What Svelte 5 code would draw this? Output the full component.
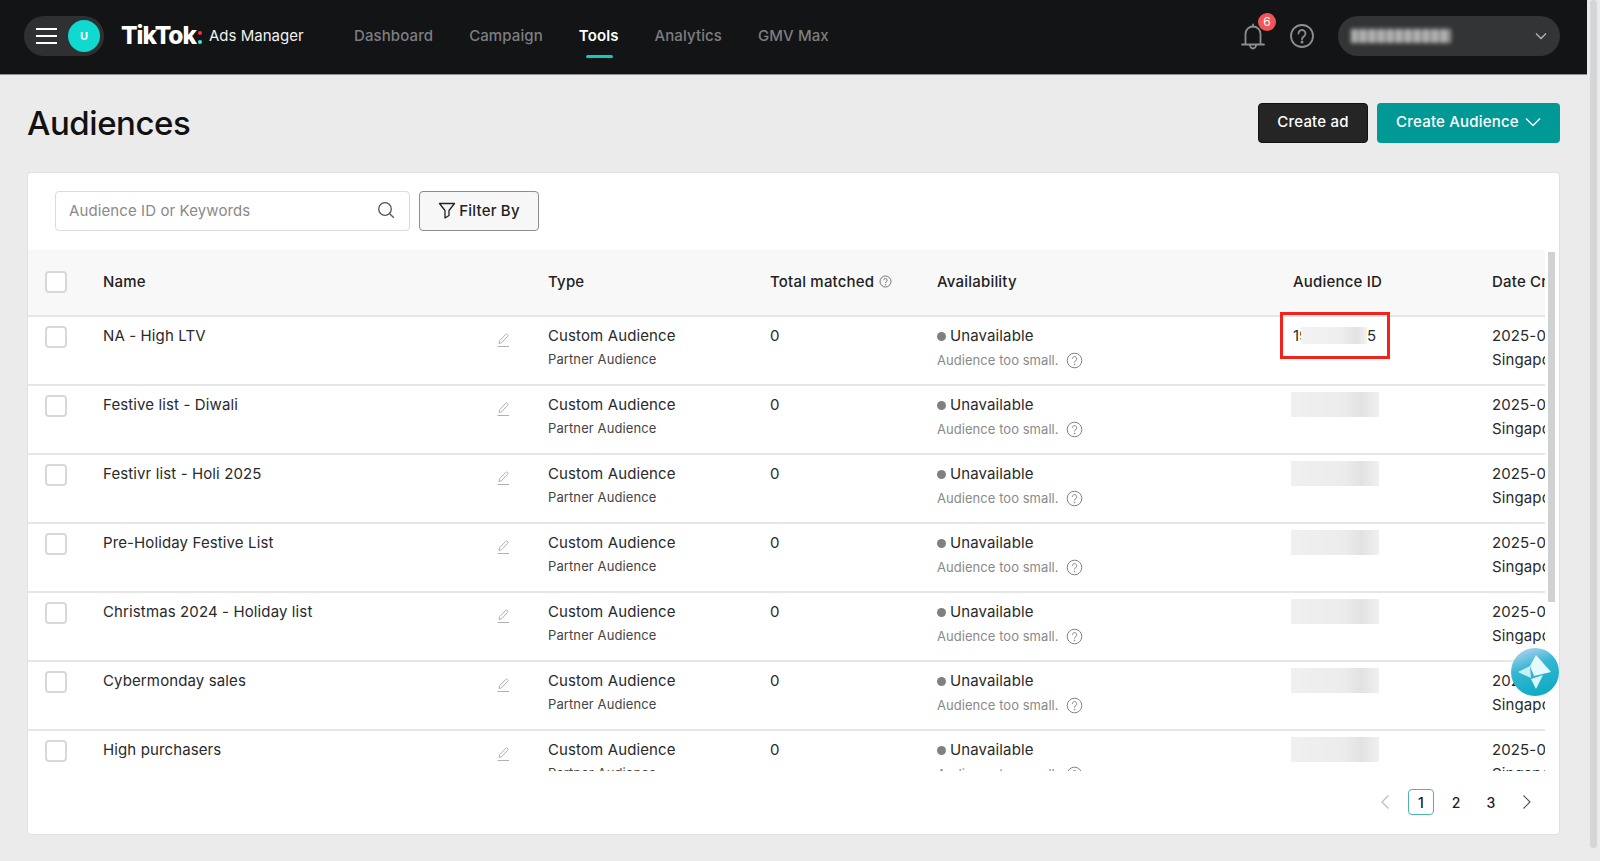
<script>
	const navItems = ['Dashboard', 'Campaign', 'Tools', 'Analytics', 'GMV Max'];
	const rows = [
		{ name: 'NA - High LTV', date: '2025-0' },
		{ name: 'Festive list - Diwali', date: '2025-0' },
		{ name: 'Festivr list - Holi 2025', date: '2025-0' },
		{ name: 'Pre-Holiday Festive List', date: '2025-0' },
		{ name: 'Christmas 2024 - Holiday list', date: '2025-0' },
		{ name: 'Cybermonday sales', date: '2025-0' },
		{ name: 'High purchasers', date: '2025-0' }
	];
</script>

<div class="page">
	<div class="main">
		<header class="nav">
			<div class="pill">
				<span class="burger"><i></i><i></i><i></i></span>
				<span class="avatar">U</span>
			</div>
			<div class="logo">
				<span class="tiktok">TikTok</span>
				<span class="dots"><i class="pink"></i><i class="cyan"></i></span>
				<span class="ads">Ads Manager</span>
			</div>
			<nav>
				{#each navItems as item}
					<span class="nav-item" class:active={item === 'Tools'}>{item}</span>
				{/each}
			</nav>
			<div class="nav-right">
				<span class="bell">
					<svg width="28" height="32" viewBox="0 0 28 32" fill="none" stroke="#8d8e90" stroke-width="1.8">
						<path d="M3 24.5h22M6.5 24.5V14a7.5 7.5 0 0 1 15 0v10.5" stroke-linecap="round" />
						<path d="M14 6.500V4.500" stroke-linecap="round" />
						<path d="M11 25a3 3.500 0 0 0 6 0" />
					</svg>
					<b>6</b>
				</span>
				<svg class="help" width="26" height="26" viewBox="0 0 26 26" fill="none" stroke="#8d8e90" stroke-width="1.8">
					<circle cx="13" cy="13" r="11" />
					<path d="M9.500 10.500a3.500 3.500 0 1 1 5.600 2.800c-1.300 1-2.100 1.600-2.100 3" stroke-linecap="round" />
					<circle cx="13" cy="19" r="0.6" fill="#8d8e90" />
				</svg>
				<div class="account">
					<span class="account-blur"></span>
					<svg width="12" height="8" viewBox="0 0 12 8" fill="none" stroke="#b5b5b5" stroke-width="1.300">
						<path d="M1 1.500l5 5 5-5" />
					</svg>
				</div>
			</div>
		</header>

		<div class="content">
			<div class="title-row">
				<h1>Audiences</h1>
				<div class="actions">
					<button class="btn-dark">Create ad</button>
					<button class="btn-teal">
						Create Audience
						<svg width="16" height="10" viewBox="0 0 16 10" fill="none" stroke="#fff" stroke-width="1.500">
							<path d="M1 1.500l7 7 7-7" />
						</svg>
					</button>
				</div>
			</div>

			<section class="card">
				<div class="toolbar">
					<div class="search">
						<span>Audience ID or Keywords</span>
						<svg width="18" height="18" viewBox="0 0 18 18" fill="none" stroke="#555" stroke-width="1.300">
							<circle cx="8" cy="8" r="6.300" />
							<path d="M12.800 12.800l4 4" />
						</svg>
					</div>
					<button class="filter">
						<svg width="18" height="18" viewBox="0 0 18 18" fill="none" stroke="#222" stroke-width="1.300" stroke-linejoin="round">
							<path d="M1.500 2.500h15L11 9.500v5l-4 2.500V9.500z" />
						</svg>
						Filter By
					</button>
				</div>

				<div class="table-wrap">
					<div class="table">
						<div class="row head">
							<div class="cell-check"><span class="check"></span></div>
							<div>Name</div>
							<div>Type</div>
							<div class="matched">
								Total matched
								<svg width="13" height="13" viewBox="0 0 13 13" fill="none" stroke="#666" stroke-width="0.900">
									<circle cx="6.500" cy="6.500" r="5.500" />
									<path d="M4.800 5.200a1.700 1.700 0 1 1 2.700 1.400c-.6.400-1 .7-1 1.400" />
									<circle cx="6.500" cy="9.600" r="0.300" />
								</svg>
							</div>
							<div>Availability</div>
							<div>Audience ID</div>
							<div>Date Created</div>
						</div>
						{#each rows as row, i}
							<div class="row body">
								<div class="cell-check"><span class="check"></span></div>
								<div class="name">
									<span>{row.name}</span>
									<svg class="pencil" width="14" height="15" viewBox="0 0 14 15" fill="none" stroke="#a8a8a8" stroke-width="0.900">
										<path d="M3 10.500L3.600 7.800 9.500 1.500a1.300 1.300 0 0 1 2 2L5.500 9.800z" />
										<path d="M1.500 13.500h11.500" />
									</svg>
								</div>
								<div>
									<div>Custom Audience</div>
									<div class="sub">Partner Audience</div>
								</div>
								<div>0</div>
								<div>
									<div class="status"><i></i>Unavailable</div>
									<div class="reason">
										Audience too small.
										<svg width="17" height="17" viewBox="0 0 17 17" fill="none" stroke="#808080" stroke-width="1">
											<circle cx="8.500" cy="8.500" r="7.300" />
											<path d="M6.300 6.800a2.200 2.200 0 1 1 3.500 1.800c-.8.600-1.300 1-1.300 1.900" />
											<circle cx="8.500" cy="12.500" r="0.400" />
										</svg>
									</div>
								</div>
								<div class="id-cell">
									{#if i === 0}
										<span class="id-first">19</span><span class="smudge small"></span><span class="id-last">5</span>
									{:else}
										<span class="smudge"></span>
									{/if}
								</div>
								<div>
									<div>{row.date}</div>
									<div class="tz">Singapore</div>
								</div>
							</div>
						{/each}
					</div>
					<div class="redbox"></div>
				</div>
				<div class="inner-scroll"></div>

				<div class="pager">
					<svg class="prev" width="10" height="16" viewBox="0 0 10 16" fill="none" stroke="#bbb" stroke-width="1.200"><path d="M8.500 1.500L2 8l6.500 6.500" /></svg>
					<span class="pg current">1</span>
					<span class="pg">2</span>
					<span class="pg">3</span>
					<svg class="next" width="10" height="16" viewBox="0 0 10 16" fill="none" stroke="#555" stroke-width="1.200"><path d="M1.500 1.500L8 8l-6.500 6.500" /></svg>
				</div>

				<div class="assist">
					<svg width="48" height="48" viewBox="0 0 48 48">
						<path d="M25 7l15 17-17 4-4-10z" fill="#e6f9fb" />
						<path d="M7 24l12-6 1 12z" fill="#c8f0f4" />
						<path d="M20 31l12-4-7 14z" fill="#d9f6f8" />
					</svg>
				</div>
			</section>
		</div>
	</div>
	<aside class="page-scroll"><span></span></aside>
</div>

<style>
	:global(body) {
		margin: 0;
		background: #ebebeb;
	}

	.page {
		display: flex;
		height: 861px;
		overflow: hidden;
		font-family: Inter, 'Liberation Sans', sans-serif;
		color: #222;
	}

	.main {
		width: 1587px;
		flex: none;
	}

	.nav {
		height: 75px;
		box-sizing: border-box;
		background: #131416;
		border-bottom: 1px solid #8f8f8f;
		display: flex;
		align-items: center;
		padding: 0 27px 3px 24px;
	}

	.pill {
		width: 80px;
		height: 40px;
		border-radius: 20px;
		background: #2f3031;
		display: flex;
		align-items: center;
		padding-left: 12px;
		box-sizing: border-box;
		gap: 11px;
	}

	.burger {
		display: flex;
		flex-direction: column;
		gap: 5px;
		width: 21px;
	}

	.burger i {
		height: 2px;
		background: #fff;
	}

	.avatar {
		width: 32px;
		height: 32px;
		border-radius: 50%;
		background: #10d9d0;
		color: #fff;
		font-size: 11px;
		font-weight: 700;
		display: flex;
		align-items: center;
		justify-content: center;
	}

	.logo {
		display: flex;
		align-items: center;
		margin-left: 17px;
		color: #fff;
		width: 233px;
	}

	.tiktok {
		font-size: 24.500px;
		font-weight: 800;
		letter-spacing: -1px;
		line-height: 1;
	}

	.dots {
		display: flex;
		flex-direction: column;
		gap: 5px;
		margin: 3px 7px 0 2px;
	}

	.dots i {
		width: 4px;
		height: 4px;
		border-radius: 50%;
	}

	.pink {
		background: #fe2c55;
	}

	.cyan {
		background: #25f4ee;
	}

	.ads {
		font-size: 15px;
		color: #f2f2f2;
	}

	nav {
		display: flex;
		gap: 36px;
		height: 100%;
	}

	.nav-item {
		display: flex;
		align-items: center;
		position: relative;
		font-size: 15px;
		font-weight: 500;
		letter-spacing: 0.1px;
		color: #7d7e80;
	}

	.nav-item.active {
		color: #fff;
		font-weight: 600;
	}

	.nav-item.active::after {
		content: '';
		position: absolute;
		left: 7px;
		right: 6px;
		bottom: 13px;
		height: 3px;
		border-radius: 2px;
		background: #12c8c0;
	}

	.nav-right {
		margin-left: auto;
		display: flex;
		align-items: center;
	}

	.bell {
		position: relative;
		display: flex;
		margin-right: 22px;
	}

	.bell b {
		position: absolute;
		top: -7px;
		right: -9px;
		width: 18px;
		height: 18px;
		border-radius: 50%;
		background: #f25555;
		color: #fff;
		font-size: 12px;
		font-weight: 400;
		display: flex;
		align-items: center;
		justify-content: center;
	}

	.account {
		width: 222px;
		height: 40px;
		margin-left: 23px;
		border-radius: 20px;
		background: #333435;
		display: flex;
		align-items: center;
		justify-content: space-between;
		padding: 0 13px;
		box-sizing: border-box;
	}

	.account-blur {
		width: 100px;
		height: 14px;
		background: repeating-linear-gradient(90deg, #b5b5b5 0 6px, #858585 6px 9px);
		filter: blur(2px);
	}

	.content {
		padding: 0 27px;
	}

	.title-row {
		height: 97px;
		box-sizing: border-box;
		padding-bottom: 2px;
		display: flex;
		align-items: center;
		justify-content: space-between;
	}

	h1 {
		margin: 0;
		font-size: 33px;
		font-weight: 500;
		letter-spacing: -0.450px;
		color: #111;
	}

	.actions {
		display: flex;
		gap: 9px;
	}

	button {
		font-family: inherit;
		height: 40px;
		border-radius: 4px;
		font-size: 15px;
		font-weight: 500;
		letter-spacing: 0.2px;
		color: #fff;
		cursor: pointer;
		padding: 0 0 2px;
	}

	.btn-dark {
		width: 110px;
		background: #252525;
		border: 1px solid #111;
	}

	.btn-teal {
		width: 183px;
		background: #009995;
		border: none;
		display: flex;
		align-items: center;
		justify-content: center;
		gap: 6px;
	}

	.card {
		position: relative;
		height: 663px;
		box-sizing: border-box;
		background: #fff;
		border: 1px solid #e0e0e0;
		border-radius: 4px;
	}

	.toolbar {
		height: 77px;
		box-sizing: border-box;
		padding: 0 27px 1px;
		display: flex;
		align-items: center;
		gap: 9px;
	}

	.search {
		width: 355px;
		height: 40px;
		box-sizing: border-box;
		border: 1px solid #dcdcdc;
		border-radius: 4px;
		padding: 0 14px 2px 13px;
		display: flex;
		align-items: center;
		justify-content: space-between;
		font-size: 15px;
		letter-spacing: 0.1px;
		color: #8a8a8a;
	}

	.filter {
		width: 120px;
		background: #f7f7f7;
		border: 1px solid #8c8c8c;
		color: #222;
		display: flex;
		align-items: center;
		justify-content: center;
		gap: 3px;
	}

	.table-wrap {
		position: relative;
		height: 521px;
		overflow: hidden;
		margin-right: 14px;
	}

	.table {
		width: 1700px;
	}

	.row {
		display: grid;
		grid-template-columns: 75px 445px 222px 167px 356px 199px 200px;
		font-size: 15px;
		letter-spacing: 0.12px;
		box-sizing: border-box;
		border-bottom: 2px solid #e6e6e6;
	}

	.head {
		height: 67px;
		background: #f8f8f8;
		align-items: center;
		font-weight: 500;
		letter-spacing: 0.2px;
		color: #222;
		padding-bottom: 2px;
	}

	.body {
		height: 69px;
		padding-top: 10px;
		line-height: 18px;
		color: #2a2a2a;
	}

	.cell-check {
		padding-left: 17px;
	}

	.body .check {
		margin-top: -1px;
	}

	.check {
		display: block;
		width: 22px;
		height: 22px;
		box-sizing: border-box;
		border: 2px solid #d8d8d8;
		border-radius: 4px;
		background: #fff;
	}

	.name {
		display: flex;
		justify-content: space-between;
		padding-right: 38px;
	}

	.pencil {
		margin-top: 6px;
	}

	.sub {
		margin-top: 5px;
		font-size: 13px;
		letter-spacing: 0.1px;
		color: #444;
	}

	.matched {
		display: flex;
		align-items: center;
		gap: 5px;
	}

	.status {
		display: flex;
		align-items: center;
		gap: 4px;
	}

	.status i {
		width: 9px;
		height: 9px;
		border-radius: 50%;
		background: #808080;
	}

	.reason {
		margin-top: 6px;
		display: flex;
		align-items: center;
		gap: 7px;
		font-size: 13px;
		letter-spacing: 0.05px;
		color: #8a8a8a;
	}

	.id-cell {
		display: flex;
		align-items: flex-start;
		position: relative;
	}

	.smudge {
		width: 88px;
		height: 25px;
		margin: -4px 0 0 -2px;
		background: linear-gradient(90deg, #f0f0f0 0%, #ececec 60%, #e2e2e2 80%, #f0f0f0 100%);
	}

	.smudge.small {
		width: 66px;
		height: 17px;
		margin: 0;
		background: linear-gradient(90deg, #f3f3f3 0%, #eeeeee 60%, #e2e2e2 85%, #f3f3f3 100%);
	}

	.id-first {
		width: 8px;
		overflow: hidden;
		white-space: nowrap;
	}

	.tz {
		margin-top: 6px;
	}

	.inner-scroll {
		position: absolute;
		left: 1520px;
		top: 79px;
		width: 7px;
		height: 350px;
		background: #d0d1d3;
	}

	.redbox {
		position: absolute;
		left: 1252px;
		top: 62px;
		width: 110px;
		height: 47px;
		box-sizing: border-box;
		border: 3px solid #f2231a;
	}

	.pager {
		display: flex;
		align-items: center;
		justify-content: flex-end;
		height: 62px;
		padding-right: 27px;
		font-size: 14px;
		font-weight: 500;
		gap: 9px;
	}

	.prev {
		margin-right: 9px;
	}

	.next {
		margin-left: 9px;
	}

	.pg {
		width: 26px;
		height: 26px;
		box-sizing: border-box;
		display: flex;
		align-items: center;
		justify-content: center;
	}

	.current {
		border: 1px solid #4fb3ae;
		border-radius: 4px;
	}

	.assist {
		position: absolute;
		left: 1483px;
		top: 475px;
		width: 48px;
		height: 48px;
		border-radius: 50%;
		background: linear-gradient(160deg, #c9d8f8 0%, #35b6d2 40%, #05a8c0 100%);
		overflow: hidden;
	}

	.assist svg {
		display: block;
	}

	.page-scroll {
		flex: 1;
		padding: 0 3px 13px;
		display: flex;
	}

	.page-scroll span {
		flex: 1;
		border-radius: 4px;
		background: #d5d6d8;
	}
</style>
